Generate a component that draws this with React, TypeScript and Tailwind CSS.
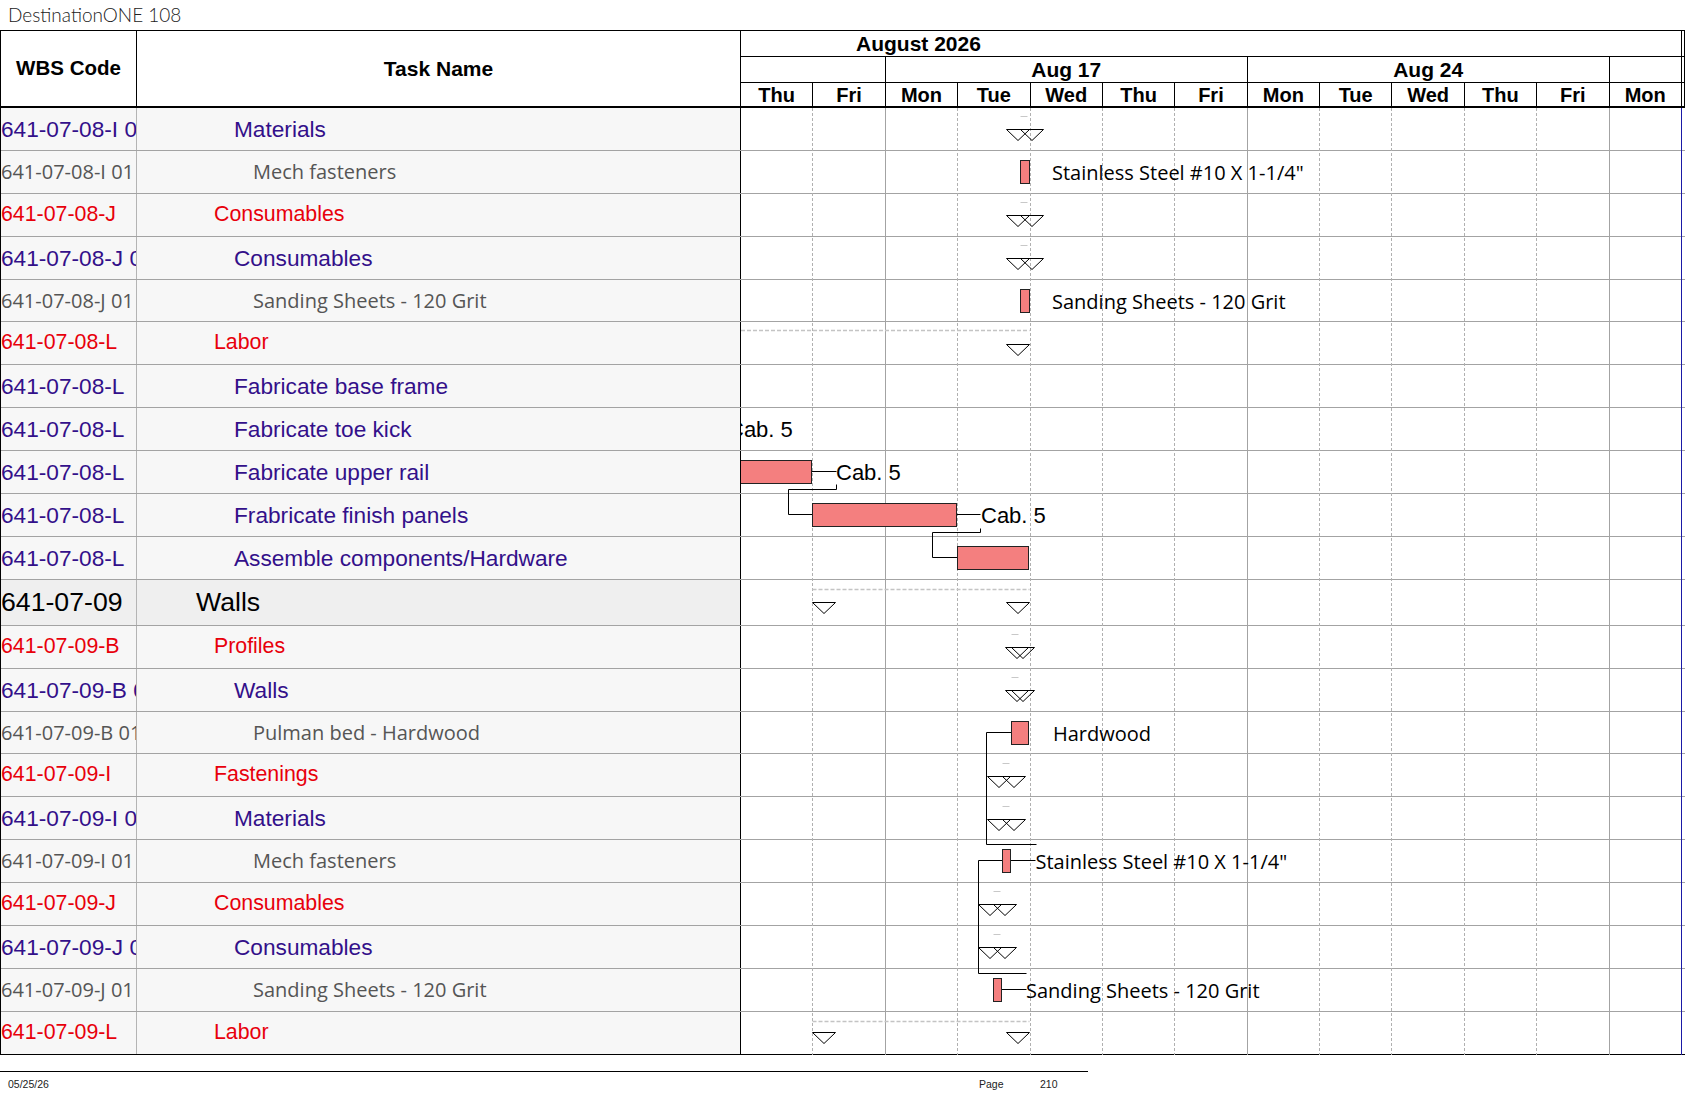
import React from 'react';

type Row = { wbs: string; name: string; lvl: 0 | 1 | 2 | 3 };

const rows: Row[] = [
  { wbs: '641-07-08-I 01', name: 'Materials', lvl: 2 },
  { wbs: '641-07-08-I 01', name: 'Mech fasteners', lvl: 3 },
  { wbs: '641-07-08-J', name: 'Consumables', lvl: 1 },
  { wbs: '641-07-08-J 01', name: 'Consumables', lvl: 2 },
  { wbs: '641-07-08-J 01', name: 'Sanding Sheets - 120 Grit', lvl: 3 },
  { wbs: '641-07-08-L', name: 'Labor', lvl: 1 },
  { wbs: '641-07-08-L', name: 'Fabricate base frame', lvl: 2 },
  { wbs: '641-07-08-L', name: 'Fabricate toe kick', lvl: 2 },
  { wbs: '641-07-08-L', name: 'Fabricate upper rail', lvl: 2 },
  { wbs: '641-07-08-L', name: 'Frabricate finish panels', lvl: 2 },
  { wbs: '641-07-08-L', name: 'Assemble components/Hardware', lvl: 2 },
  { wbs: '641-07-09', name: 'Walls', lvl: 0 },
  { wbs: '641-07-09-B', name: 'Profiles', lvl: 1 },
  { wbs: '641-07-09-B 01', name: 'Walls', lvl: 2 },
  { wbs: '641-07-09-B 01', name: 'Pulman bed - Hardwood', lvl: 3 },
  { wbs: '641-07-09-I', name: 'Fastenings', lvl: 1 },
  { wbs: '641-07-09-I 01', name: 'Materials', lvl: 2 },
  { wbs: '641-07-09-I 01', name: 'Mech fasteners', lvl: 3 },
  { wbs: '641-07-09-J', name: 'Consumables', lvl: 1 },
  { wbs: '641-07-09-J 01', name: 'Consumables', lvl: 2 },
  { wbs: '641-07-09-J 01', name: 'Sanding Sheets - 120 Grit', lvl: 3 },
  { wbs: '641-07-09-L', name: 'Labor', lvl: 1 },
];

const days = ['Thu', 'Fri', 'Mon', 'Tue', 'Wed', 'Thu', 'Fri', 'Mon', 'Tue', 'Wed', 'Thu', 'Fri', 'Mon'];

const RH = 42.9;
const rowTop = (i: number) => (i <= 11 ? RH * i : 517.9 + RH * (i - 12));
const barTop = (i: number) => Math.round(rowTop(i) + 9);

const txtCls: Record<number, string> = {
  0: "text-[26.67px] text-black font-['Liberation_Sans',Arial,sans-serif]",
  1: "text-[21.33px] text-[#e8000b] font-['Liberation_Sans',Arial,sans-serif]",
  2: "text-[22.67px] text-[#33108a] font-['Liberation_Sans',Arial,sans-serif]",
  3: "text-[20px] text-[#555555] font-['Open_Sans',sans-serif]",
};
const namePad: Record<number, string> = {
  0: 'pl-[59px]',
  1: 'pl-[77px]',
  2: 'pl-[97px]',
  3: 'pl-[116px]',
};

function Header() {
  return (
    <div className="flex h-[77px] border-b-2 border-black font-['Liberation_Sans',Arial,sans-serif] font-bold text-black">
      <div className="w-[136px] shrink-0 border-r border-black flex items-center justify-center text-[20.5px]">
        WBS Code
      </div>
      <div className="w-[604px] shrink-0 border-r border-black flex items-center justify-center text-[21px]">
        Task Name
      </div>
      <div className="w-[944px] shrink-0 border-r border-black flex flex-col">
        <div className="h-[26px] border-b border-black flex">
          <div className="w-[941px] shrink-0 border-r border-black flex items-center pl-[115px] text-[21px] leading-none">
            August 2026
          </div>
        </div>
        <div className="h-[26px] border-b border-black flex text-[21px] leading-none">
          <div className="w-[144.77px] shrink-0 border-r border-black" />
          <div className="w-[361.925px] shrink-0 border-r border-black flex items-center justify-center">Aug 17</div>
          <div className="w-[361.925px] shrink-0 border-r border-black flex items-center justify-center">Aug 24</div>
          <div className="w-[72.385px] shrink-0 border-r border-black" />
        </div>
        <div className="flex-1 flex text-[20px] leading-none">
          {days.map((d, i) => (
            <div key={i} className="w-[72.385px] shrink-0 border-r border-black flex items-center justify-center">
              {d}
            </div>
          ))}
        </div>
      </div>
    </div>
  );
}

function LeftRow({ r, last }: { r: Row; last: boolean }) {
  const h = r.lvl === 0 ? 'h-[46px]' : 'h-[42.9px]';
  const bg = r.lvl === 0 ? 'bg-[#efefef]' : 'bg-[#f7f7f7]';
  const bd = last ? 'border-black' : 'border-[#a3a3a3]';
  return (
    <div className={`flex ${h} border-b ${bd} ${bg}`}>
      <div
        className={`w-[136px] shrink-0 border-r border-[#b4b4b4] flex items-center overflow-hidden whitespace-nowrap ${txtCls[r.lvl]}`}
      >
        {r.wbs}
      </div>
      <div
        className={`w-[604px] shrink-0 border-r border-black flex items-center overflow-hidden whitespace-nowrap ${namePad[r.lvl]} ${txtCls[r.lvl]}`}
      >
        {r.name}
      </div>
    </div>
  );
}

const Tri = ({ x, y }: { x: number; y: number }) => (
  <path d={`M${x} ${y}h23l-11.5 11z`} fill="none" stroke="#000" strokeWidth={1} />
);

function WShape({ row, s, e }: { row: number; s: number; e: number }) {
  const y = Math.round(rowTop(row) + 21) + 0.5;
  const dy = Math.round(rowTop(row) + 8) + 0.5;
  return (
    <g>
      <line x1={s} y1={dy} x2={s + 7} y2={dy} stroke="#c8c8c8" strokeWidth={1} />
      <Tri x={e - 23} y={y} />
      <Tri x={s} y={y} />
    </g>
  );
}

function Bar({ row, x, w }: { row: number; x: number; w: number }) {
  return <rect x={x} y={barTop(row) + 0.5} width={w} height={23} fill="#f47f7f" stroke="#222" strokeWidth={1} />;
}

const OPEN = "'Open Sans', sans-serif";
const ARIAL = "'Liberation Sans', Arial, sans-serif";

function ChartDrawing() {
  const vlines = days.map((_, i) => Math.round(72.385 * (i + 1)) - 0.5);
  const mid = (i: number) => barTop(i) + 11.5;
  const wRows: { row: number; s: number; e: number }[] = [
    { row: 0, s: 279.5, e: 288.5 },
    { row: 2, s: 279.5, e: 288.5 },
    { row: 3, s: 279.5, e: 288.5 },
    { row: 12, s: 270.5, e: 287.5 },
    { row: 13, s: 270.5, e: 287.5 },
    { row: 15, s: 261.5, e: 269.5 },
    { row: 16, s: 261.5, e: 269.5 },
    { row: 18, s: 252.5, e: 260.5 },
    { row: 19, s: 252.5, e: 260.5 },
  ];
  const l1 = Math.round(rowTop(5) + 7.5) + 0.5;
  const lw = Math.round(rowTop(11) + 9.4) + 0.5;
  const l2 = Math.round(rowTop(21) + 8.7) + 0.5;
  return (
    <svg className="absolute left-0 top-0" width={943} height={947}>
      {vlines.map((x, i) => {
        const solid = i === 1 || i === 6 || i === 11;
        const blue = i === 12;
        return (
          <line
            key={i}
            x1={x}
            y1={0}
            x2={x}
            y2={947}
            stroke={blue ? '#1a1aa6' : solid ? '#a3a3a3' : '#b0b0b0'}
            strokeWidth={1}
            strokeDasharray={blue || solid ? undefined : '3 2'}
          />
        );
      })}

      {/* summary dashed lines */}
      <line x1={0} y1={l1} x2={288.5} y2={l1} stroke="#c4c4c4" strokeWidth={1.5} strokeDasharray="4 2" />
      <line x1={71.5} y1={lw} x2={288.5} y2={lw} stroke="#c4c4c4" strokeWidth={1.5} strokeDasharray="4 2" />
      <line x1={71.5} y1={l2} x2={288.5} y2={l2} stroke="#c4c4c4" strokeWidth={1.5} strokeDasharray="4 2" />

      {wRows.map((w) => (
        <WShape key={w.row} row={w.row} s={w.s} e={w.e} />
      ))}

      {/* Labor (first) */}
      <Tri x={265.5} y={Math.round(rowTop(5) + 21) + 0.5} />
      {/* Walls */}
      <Tri x={71.5} y={Math.round(rowTop(11) + 22.4) + 0.5} />
      <Tri x={265.5} y={Math.round(rowTop(11) + 22.4) + 0.5} />
      {/* Labor (last) */}
      <Tri x={71.5} y={Math.round(rowTop(21) + 20.3) + 0.5} />
      <Tri x={265.5} y={Math.round(rowTop(21) + 20.3) + 0.5} />

      {/* connectors */}
      <g fill="none" stroke="#000" strokeWidth={1}>
        <path d={`M70.5 ${mid(8)}H95.5`} />
        <path d={`M95.5 376.5V381.5H47.5V${mid(9)}H71.5`} />
        <path d={`M215.5 ${mid(9)}H239.5`} />
        <path d={`M239.5 420.5V424.5H191.5V${mid(10)}H216.5`} />
        <path d={`M270.5 ${mid(14)}H245.5V736.5H295.5`} />
        <path d={`M269.5 ${mid(17)}H294.5`} />
        <path d={`M261.5 ${mid(17)}H237.5V865.5H285.5`} />
        <path d={`M260.5 ${mid(20)}H285.5`} />
      </g>

      {/* bars */}
      <Bar row={1} x={279.5} w={9} />
      <Bar row={4} x={279.5} w={9} />
      <Bar row={8} x={-0.5} w={71} />
      <Bar row={9} x={71.5} w={144} />
      <Bar row={10} x={216.5} w={71} />
      <Bar row={14} x={270.5} w={17} />
      <Bar row={17} x={261.5} w={8} />
      <Bar row={20} x={252.5} w={8} />

      {/* labels */}
      <g fill="#000">
        <text x={311} y={mid(1) + 8} fontFamily={OPEN} fontSize={20}>
          Stainless Steel #10 X 1-1/4"
        </text>
        <text x={311} y={mid(4) + 8} fontFamily={OPEN} fontSize={20}>
          Sanding Sheets - 120 Grit
        </text>
        <text x={-13} y={rowTop(7) + 29} fontFamily={ARIAL} fontSize={22}>
          Cab. 5
        </text>
        <text x={95} y={mid(8) + 8} fontFamily={ARIAL} fontSize={22}>
          Cab. 5
        </text>
        <text x={240} y={mid(9) + 8} fontFamily={ARIAL} fontSize={22}>
          Cab. 5
        </text>
        <text x={312} y={mid(14) + 8} fontFamily={OPEN} fontSize={20}>
          Hardwood
        </text>
        <text x={294.5} y={mid(17) + 8} fontFamily={OPEN} fontSize={20}>
          Stainless Steel #10 X 1-1/4"
        </text>
        <text x={285} y={mid(20) + 8} fontFamily={OPEN} fontSize={20}>
          Sanding Sheets - 120 Grit
        </text>
      </g>
    </svg>
  );
}

function Body() {
  return (
    <div className="flex">
      <div className="w-[740px] shrink-0">
        {rows.map((r, i) => (
          <LeftRow key={i} r={r} last={i === rows.length - 1} />
        ))}
      </div>
      <div className="relative w-[944px] shrink-0 overflow-hidden bg-white">
        {rows.map((r, i) => (
          <div
            key={i}
            className={`${r.lvl === 0 ? 'h-[46px]' : 'h-[42.9px]'} border-b ${
              i === rows.length - 1 ? 'border-black' : 'border-[#a3a3a3]'
            }`}
          />
        ))}
        <ChartDrawing />
      </div>
    </div>
  );
}

export default function App() {
  return (
    <div className="w-[1687px] h-[1097px] bg-white overflow-hidden text-black">
      <div className="h-[30px] pl-[8px] leading-[30px] text-[19px] font-light text-[#222] font-['Lato',sans-serif]">
        DestinationONE 108
      </div>
      <div className="w-[1685px] border-l border-t border-black">
        <Header />
        <Body />
      </div>
      <div className="mt-[16px] w-[1088px] border-t border-black flex pt-[6px] text-[10.5px] leading-[13px] text-[#222] font-['Liberation_Sans',Arial,sans-serif]">
        <div className="w-[979px] shrink-0 pl-[8px]">05/25/26</div>
        <div className="w-[61px] shrink-0">Page</div>
        <div>210</div>
      </div>
    </div>
  );
}
